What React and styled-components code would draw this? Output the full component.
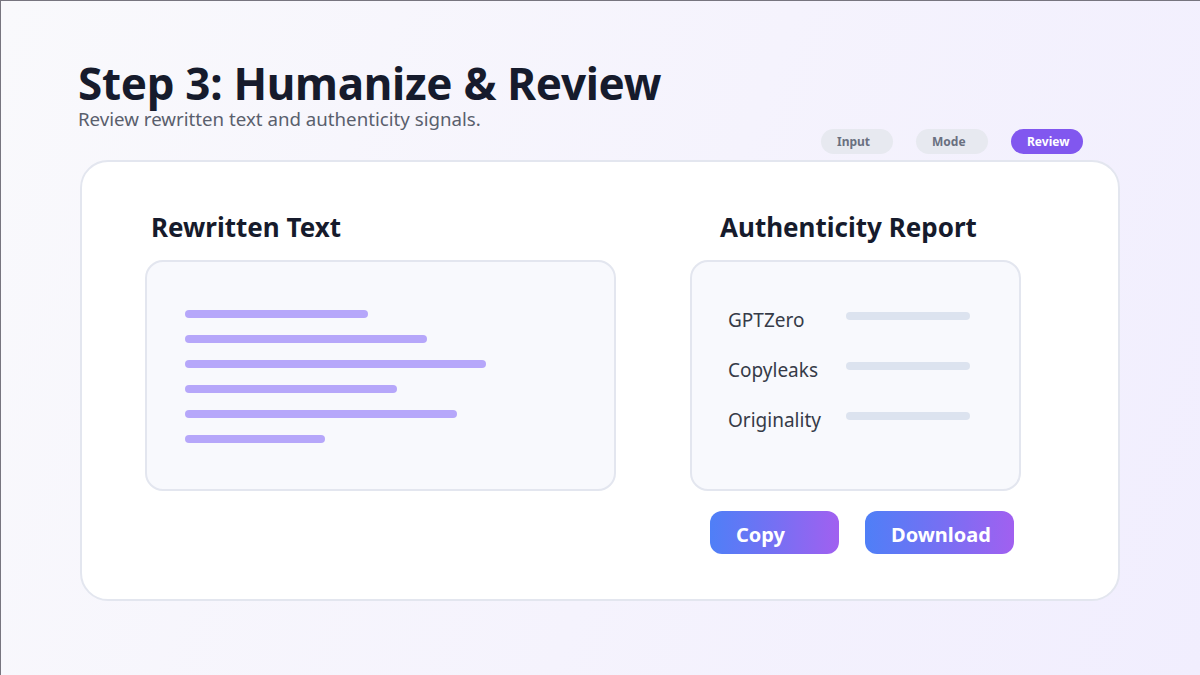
import React from "react";
import styled, { createGlobalStyle } from "styled-components";

const GlobalStyle = createGlobalStyle`
  html, body {
    margin: 0;
    padding: 0;
  }
  body {
    font-family: "Noto Sans", "Open Sans", sans-serif;
  }
`;

const Page = styled.div`
  box-sizing: border-box;
  width: 1200px;
  height: 675px;
  overflow: hidden;
  border-top: 1px solid #77757f;
  border-left: 1px solid #77757f;
  background: linear-gradient(110deg, #f9f9fc 0%, #f5f3fd 55%, #f1eefe 100%);
  padding: 58px 80px 0 77px;
`;

const Title = styled.h1`
  margin: 0;
  font-size: 44px;
  line-height: 48px;
  font-weight: 700;
  color: #161b2c;
  letter-spacing: -0.3px;
`;

const Subtitle = styled.p`
  margin: 1px 0 0;
  font-size: 18.7px;
  line-height: 22px;
  color: #5a5f6d;
`;

const Steps = styled.div`
  display: flex;
  justify-content: flex-end;
  gap: 23px;
  margin: -1px 37px 6px 0;
`;

const StepPill = styled.div`
  box-sizing: border-box;
  width: 72px;
  height: 25px;
  border-radius: 13px;
  padding-left: 16px;
  display: flex;
  align-items: center;
  font-size: 12px;
  font-weight: 700;
  background: ${(p) => (p.$active ? "#8157ef" : "#e7e9f0")};
  color: ${(p) => (p.$active ? "#ffffff" : "#6a7080")};
`;

const Card = styled.div`
  box-sizing: border-box;
  width: 1040px;
  height: 441px;
  margin-left: 2px;
  background: #ffffff;
  border: 2px solid #e3e6ef;
  border-radius: 28px;
  padding: 47px 99px 0 63px;
  display: grid;
  grid-template-columns: 471px 331px;
  column-gap: 74px;
`;

const Column = styled.div`
  display: flex;
  flex-direction: column;
`;

const Heading = styled.h2`
  margin: 0 0 15px;
  padding-left: ${(p) => p.$indent || 0}px;
  font-size: 26px;
  line-height: 36px;
  font-weight: 700;
  color: #161b2c;
`;

const Panel = styled.div`
  box-sizing: border-box;
  height: 231px;
  background: #f8f9fd;
  border: 2px solid #e3e6ef;
  border-radius: 18px;
`;

const TextLines = styled(Panel)`
  padding: 48px 0 0 38px;
  display: flex;
  flex-direction: column;
  gap: 17px;
`;

const Line = styled.div`
  height: 8px;
  border-radius: 4px;
  background: #b6a7fa;
`;

const ReportRows = styled(Panel)`
  padding: 44px 0 0 36px;
  display: flex;
  flex-direction: column;
  gap: 22px;
`;

const ReportRow = styled.div`
  display: grid;
  grid-template-columns: 118px 124px;
  align-items: start;
  height: 28px;
`;

const Label = styled.span`
  font-size: 19px;
  line-height: 28px;
  color: #363b48;
`;

const ScoreBar = styled.div`
  margin-top: 6px;
  height: 8px;
  border-radius: 4px;
  background: #dce3ef;
`;

const Actions = styled.div`
  display: flex;
  gap: 26px;
  margin: 20px 0 0 20px;
`;

const Button = styled.button`
  box-sizing: border-box;
  width: ${(p) => p.$width}px;
  height: 43px;
  border: none;
  border-radius: 12px;
  padding: 4px 0 0 ${(p) => p.$pad}px;
  text-align: left;
  font-family: inherit;
  font-size: 20px;
  font-weight: 700;
  color: #ffffff;
  background: linear-gradient(90deg, #4f7ff7 0%, #7570f3 50%, #a160f0 100%);
`;

const lines = [183, 242, 301, 212, 272, 140];
const detectors = ["GPTZero", "Copyleaks", "Originality"];

export default function App() {
  return (
    <>
      <GlobalStyle />
      <Page>
        <Title>Step 3: Humanize &amp; Review</Title>
        <Subtitle>Review rewritten text and authenticity signals.</Subtitle>
        <Steps>
          <StepPill>Input</StepPill>
          <StepPill>Mode</StepPill>
          <StepPill $active>Review</StepPill>
        </Steps>
        <Card>
          <Column>
            <Heading $indent={6}>Rewritten Text</Heading>
            <TextLines>
              {lines.map((w, i) => (
                <Line key={i} style={{ width: w }} />
              ))}
            </TextLines>
          </Column>
          <Column>
            <Heading $indent={30}>Authenticity Report</Heading>
            <ReportRows>
              {detectors.map((d) => (
                <ReportRow key={d}>
                  <Label>{d}</Label>
                  <ScoreBar />
                </ReportRow>
              ))}
            </ReportRows>
            <Actions>
              <Button $width={129} $pad={26}>Copy</Button>
              <Button $width={149} $pad={26}>Download</Button>
            </Actions>
          </Column>
        </Card>
      </Page>
    </>
  );
}
